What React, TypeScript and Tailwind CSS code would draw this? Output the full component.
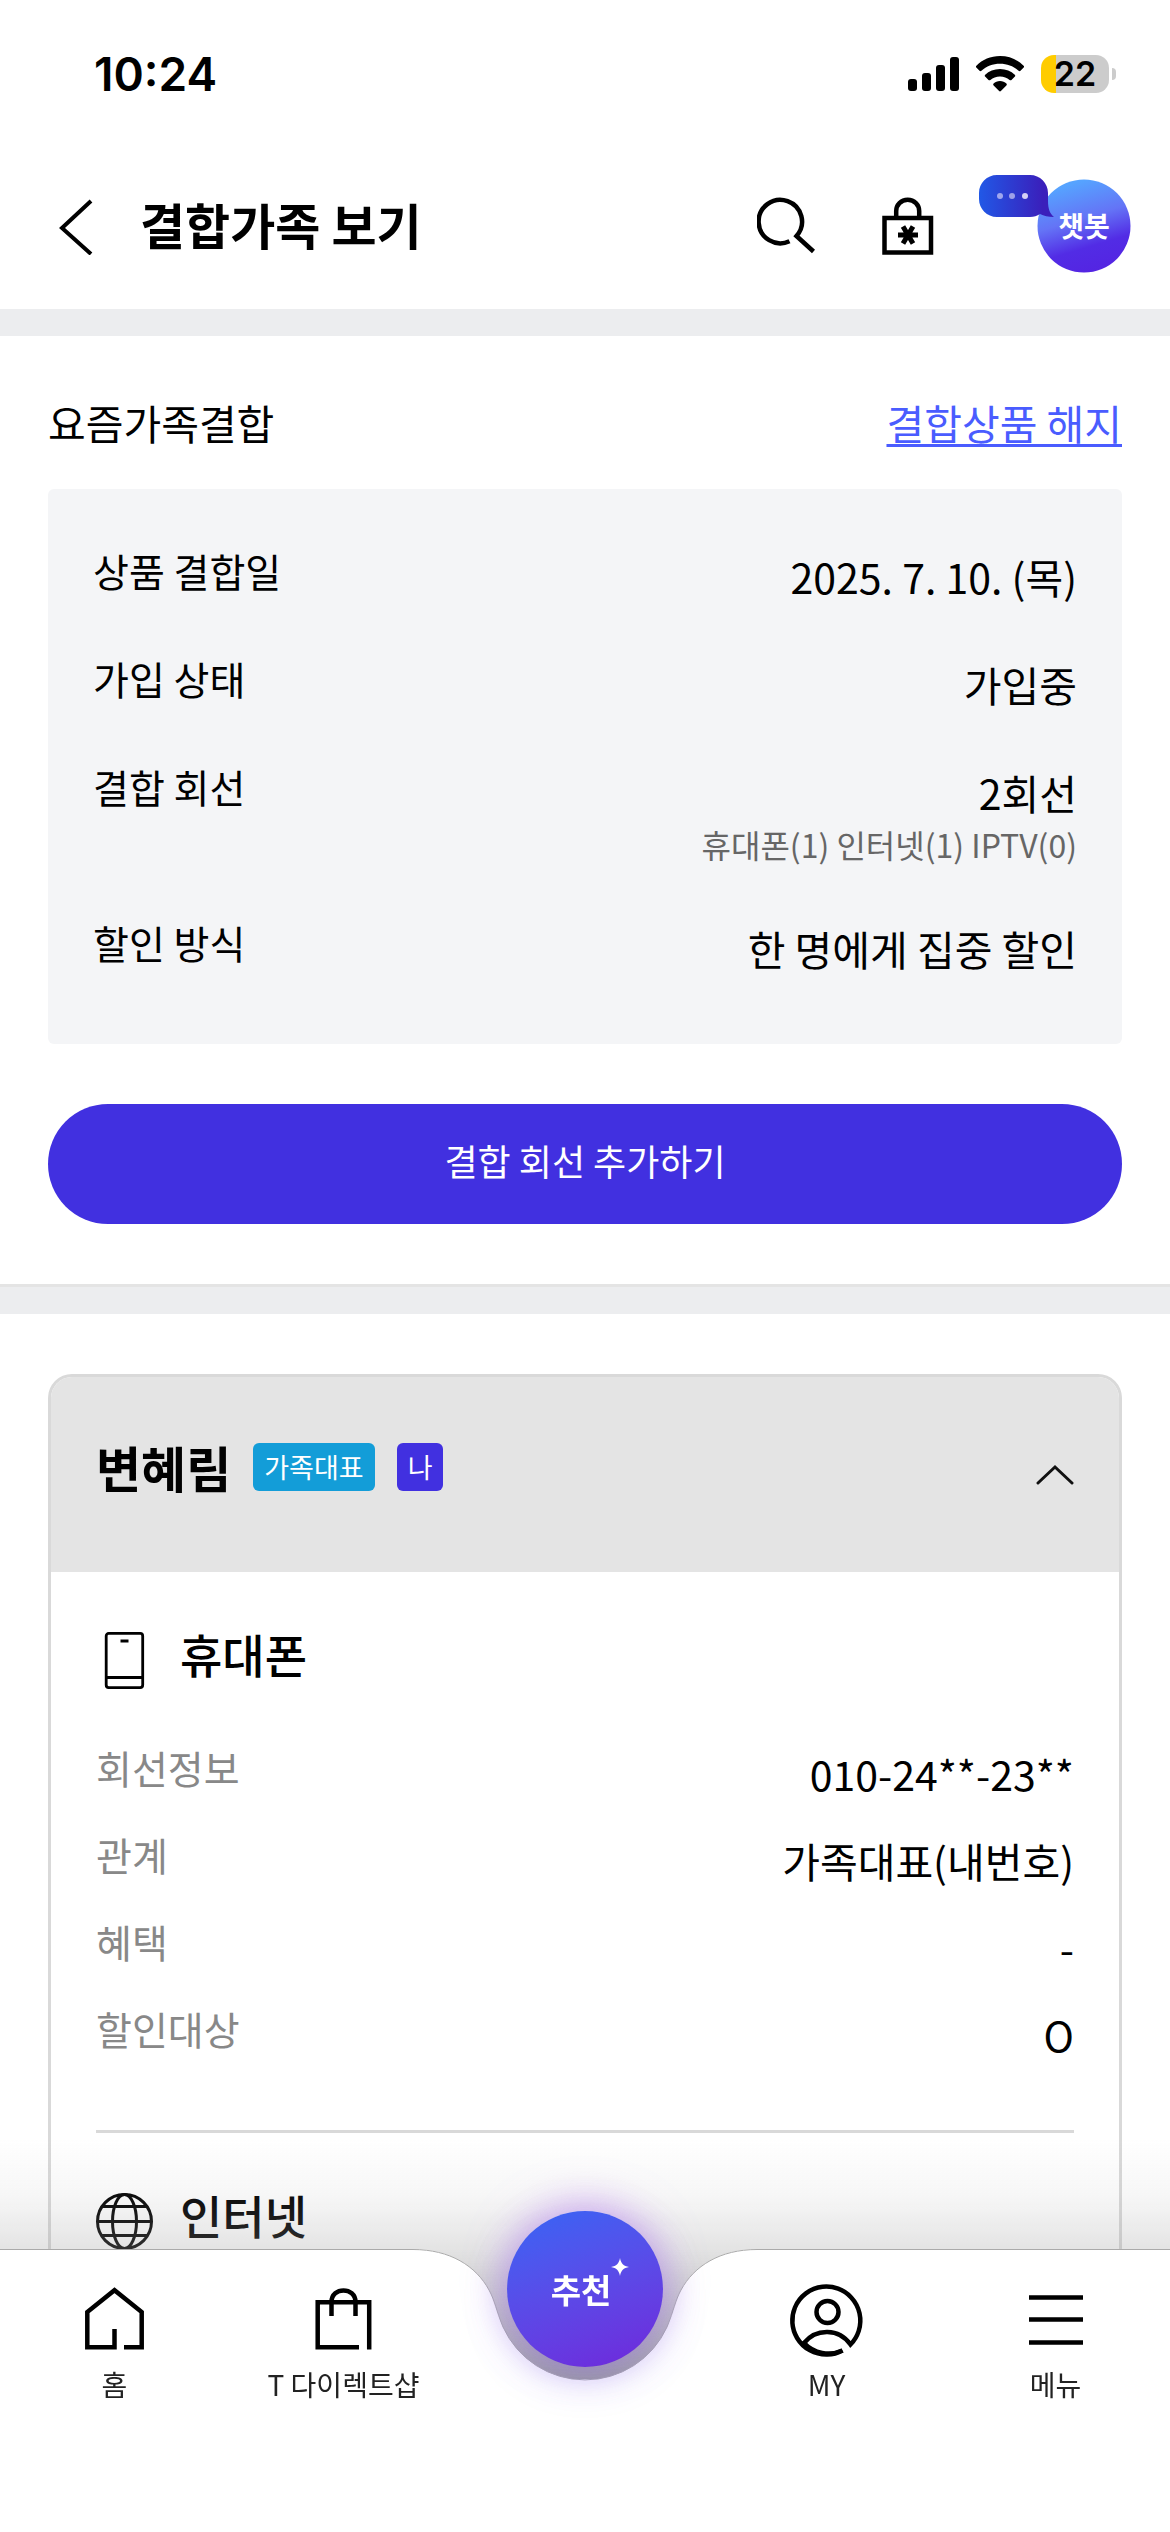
import { useState } from 'react';
import type { ReactNode } from 'react';

interface InfoItem {
  label: string;
  value: string;
  note?: string;
}

const SUMMARY: InfoItem[] = [
  { label: '상품 결합일', value: '2025. 7. 10. (목)' },
  { label: '가입 상태', value: '가입중' },
  { label: '결합 회선', value: '2회선', note: '휴대폰(1) 인터넷(1) IPTV(0)' },
  { label: '할인 방식', value: '한 명에게 집중 할인' },
];

const PHONE_INFO: InfoItem[] = [
  { label: '회선정보', value: '010-24**-23**' },
  { label: '관계', value: '가족대표(내번호)' },
  { label: '혜택', value: '-' },
  { label: '할인대상', value: 'O' },
];

function StatusBar() {
  return (
    <div className="flex items-center justify-between h-36 pt-1 pl-[94px] pr-[54px]">
      <span className="font-['Inter'] text-[46px] leading-[56px] font-semibold">10:24</span>
      <div className="flex items-center gap-[17px]">
        <svg className="w-[51px] h-[34px]" viewBox="0 0 51 34">
          <rect x="0" y="22" width="9" height="12" rx="3" />
          <rect x="14" y="16" width="9" height="18" rx="3" />
          <rect x="28" y="8" width="9" height="26" rx="3" />
          <rect x="42" y="0" width="9" height="34" rx="3" />
        </svg>
        <svg className="w-12 h-9" viewBox="0 0 48 36">
          <path d="M24 0C33.500 0 41.500 3.600 47.600 9.700C48.200 10.300 48.200 11 47.700 11.500L44.500 14.800C43.900 15.400 43.200 15.400 42.600 14.800C37.600 10.200 31.300 7.700 24 7.700C16.700 7.700 10.400 10.200 5.400 14.800C4.800 15.400 4.100 15.400 3.500 14.800L.3 11.500C-.2 11-.2 10.300.4 9.700C6.500 3.600 14.500 0 24 0Z" />
          <path d="M24 13C30 13 35 15.200 38.800 18.700C39.400 19.300 39.400 20 38.900 20.500L35.500 23.900C34.900 24.500 34.200 24.500 33.600 24C31 21.800 27.800 20.500 24 20.500C20.200 20.500 17 21.800 14.400 24C13.800 24.500 13.100 24.500 12.500 23.900L9.100 20.500C8.600 20 8.600 19.300 9.200 18.700C13 15.200 18 13 24 13Z" />
          <path d="M24 25C26.600 25 28.800 26 30.400 27.600C31 28.200 31 28.800 30.400 29.400L24.900 35.100C24.300 35.700 23.700 35.700 23.100 35.100L17.600 29.400C17 28.800 17 28.200 17.600 27.600C19.200 26 21.400 25 24 25Z" />
        </svg>
        <div className="flex items-center gap-[3px]">
          <span className="flex items-center justify-center w-[68px] h-[38px] rounded-[13px] bg-linear-to-r from-[#ffcc00] from-[22%] to-[#cccccc] to-[22%] font-['Inter'] text-[34px] leading-[38px] font-semibold">
            22
          </span>
          <span className="w-1 h-3 rounded-r-full bg-[#cccccc]" />
        </div>
      </div>
    </div>
  );
}

function Header() {
  return (
    <header className="flex items-center justify-between h-[165px] pl-[58px] pr-[39px]">
      <div className="flex items-center gap-[46px]">
        <button aria-label="뒤로">
          <svg className="w-9 h-14" viewBox="0 0 36 56" fill="none" stroke="#000" strokeWidth="4">
            <path d="M33 2L4 29L33 55" />
          </svg>
        </button>
        <h1 className="pb-1.5 text-[49px] leading-[72px] font-bold">결합가족 보기</h1>
      </div>
      <div className="flex items-center">
        <button aria-label="검색" className="mr-16">
          <svg className="w-[60px] h-[60px]" viewBox="0 0 60 60" fill="none" stroke="#000" strokeWidth="4.500">
            <path d="M56.500 54.500L39.500 39A21.700 21.700 0 1 0 32.500 44.200" />
          </svg>
        </button>
        <button aria-label="잠금" className="mr-11">
          <svg className="w-[54px] h-[60px]" viewBox="0 0 54 60" fill="none" stroke="#000" strokeWidth="4.500">
            <rect x="3.500" y="21" width="46.500" height="34.500" />
            <path d="M15.200 21V14C15.200 8 20 2.700 26.700 2.700S38.200 8 38.200 14V21" />
            <path d="M17 38H37M22 29.500L32 46.500M32 29.500L22 46.500" strokeWidth="5" />
          </svg>
        </button>
        <button aria-label="챗봇" className="flex flex-col justify-center w-[152px] h-[104px] relative">
          <svg className="w-[152px] h-[104px]" viewBox="0 0 152 104">
            <defs>
              <linearGradient id="bot" x1="0.350" y1="0" x2="0.650" y2="1">
                <stop offset="0.050" stopColor="#56a3ff" />
                <stop offset="0.420" stopColor="#6474f6" />
                <stop offset="0.720" stopColor="#522ce5" />
                <stop offset="1" stopColor="#5424e2" />
              </linearGradient>
              <linearGradient id="bubble" x1="0" y1="0" x2="1" y2="0">
                <stop offset="0" stopColor="#2158e6" />
                <stop offset="0.850" stopColor="#3a1fbb" />
              </linearGradient>
            </defs>
            <circle cx="105" cy="51" r="46.500" fill="url(#bot)" />
            <path
              d="M18 0H51C61 0 69 8 69 18V26C69 34 71 39 75 42C69 42 65 41 61 39C58 41 55 42 51 42H18C8 42 0 34 0 24V18C0 8 8 0 18 0Z"
              fill="url(#bubble)"
            />
            <circle cx="21" cy="21" r="3" fill="#9fa6ee" />
            <circle cx="33" cy="21" r="3" fill="#9fa0e8" />
            <circle cx="46" cy="21" r="3" fill="#d5d0f5" />
          </svg>
          <span className="absolute inset-y-0 right-0 w-[94px] text-[28px] leading-[100px] font-bold text-white">챗봇</span>
        </button>
      </div>
    </header>
  );
}

function InfoRow({ item, labelClass }: { item: InfoItem; labelClass: string }) {
  return (
    <div className="flex items-start justify-between">
      <dt className={labelClass}>{item.label}</dt>
      <dd className="text-right text-[41px] leading-[56px]">
        {item.value}
        {item.note && <p className="text-[32px] leading-[48px] text-[#666666]">{item.note}</p>}
      </dd>
    </div>
  );
}

function LineTitle({ icon, children }: { icon: ReactNode; children: ReactNode }) {
  return (
    <div className="flex items-end gap-[27px]">
      {icon}
      <h3 className="text-[46px] leading-[72px] font-medium">{children}</h3>
    </div>
  );
}

const phoneIcon = (
  <svg className="w-[57px] h-[57px]" viewBox="0 0 57 57" fill="none" stroke="#000" strokeWidth="2.800">
    <rect x="10.200" y="1.400" width="36.500" height="54.200" rx="2.500" />
    <path d="M10 45.500H47" />
    <path d="M24.500 9H32.500" strokeWidth="3" />
  </svg>
);

const globeIcon = (
  <svg className="w-[57px] h-[57px]" viewBox="0 0 57 57" fill="none" stroke="#000" strokeWidth="3">
    <circle cx="28.500" cy="28.500" r="27" />
    <ellipse cx="28.500" cy="28.500" rx="12" ry="27" />
    <path d="M1 28.500H56M6 13.500H51M6 42.500H51" />
  </svg>
);

function MemberCard() {
  const [open, setOpen] = useState(true);

  return (
    <div className="flex-1 mx-12 mt-[60px] border-[3px] border-b-0 border-[#d9d9d9] rounded-t-3xl overflow-hidden">
      <div className="flex items-center justify-between h-[195px] px-[45px] bg-[#e4e4e4]">
        <div className="flex items-center gap-[22px] pb-4">
          <h2 className="text-[49px] leading-[72px] font-bold">변혜림</h2>
          <span className="px-[11px] rounded-md bg-[#139dd8] text-[27px] leading-[48px] text-white">가족대표</span>
          <span className="px-[11px] rounded-md bg-[#4130e0] text-[27px] leading-[48px] text-white">나</span>
        </div>
        <button aria-label="접기" aria-expanded={open} onClick={() => setOpen(!open)}>
          <svg className="w-10 h-6" viewBox="0 0 40 24" fill="none" stroke="#111" strokeWidth="3" strokeLinecap="round">
            <path d="M4 20L21 4L38 20" />
          </svg>
        </button>
      </div>

      {open && (
        <div className="px-[45px]">
          <section className="pt-[45px] pb-[68px] border-b-[3px] border-[#d9d9d9]">
            <LineTitle icon={phoneIcon}>휴대폰</LineTitle>
            <dl className="flex flex-col gap-[31px] mt-14">
              {PHONE_INFO.map(item => (
                <InfoRow key={item.label} item={item} labelClass="text-[39px] leading-[44px] text-[#888888]" />
              ))}
            </dl>
          </section>
          <section className="pt-[45px]">
            <LineTitle icon={globeIcon}>인터넷</LineTitle>
          </section>
        </div>
      )}
    </div>
  );
}

function NavItem({ label, children }: { label: string; children: ReactNode }) {
  return (
    <a href="#" className="flex flex-col items-center text-[28px] leading-10 text-[#222222]">
      <svg className="w-20 h-20 mb-1.5" viewBox="0 0 80 80" fill="none" stroke="#000" strokeWidth="4.500">
        {children}
      </svg>
      {label}
    </a>
  );
}

function BottomNav() {
  return (
    <nav className="fixed inset-x-0 bottom-0 h-[283px]">
      {/* Shade over the scrolled content, it also fills the notch */}
      <div className="absolute inset-x-0 -top-[110px] h-60 bg-[linear-gradient(to_bottom,rgba(160,160,160,0)_0%,rgba(160,160,160,0.09)_24%,rgba(160,160,160,0.28)_45%,rgba(160,160,160,0.6)_70%,rgba(160,160,160,1)_100%)]" />

      {/* Bar with the notch in the middle */}
      <div className="absolute inset-0 flex">
        <div className="flex-1 bg-white border-t border-[#aaaaaa]" />
        <svg className="w-[360px] h-[283px]" viewBox="0 0 360 283">
          <path
            d="M0 0H8C45 0 71 17 84 41C90 52 91 61 98 78A90 90 0 0 0 262 78C269 61 270 52 276 41C289 17 315 0 352 0H360V283H0Z"
            fill="#fff"
          />
          <path
            d="M0 .5H8C45 .5 71 17 84 41C90 52 91 61 98 78A90 90 0 0 0 262 78C269 61 270 52 276 41C289 17 315 .5 352 .5H360"
            fill="none"
            stroke="#aaaaaa"
          />
        </svg>
        <div className="flex-1 bg-white border-t border-[#aaaaaa]" />
      </div>

      <div className="relative flex items-start">
        <div className="flex-1 grid grid-cols-2 pt-[29px]">
          <NavItem label="홈">
            <path d="M49 69.200H66.700V34L39.500 12.200L12.300 34V69.200H39.500V51" />
          </NavItem>
          <NavItem label="T 다이렉트샵">
            <path d="M55 69.200H13.700V24.200H65.200V71.500M27.500 38V24C27.500 8.500 51.500 8.500 51.500 24V38" />
          </NavItem>
        </div>
        <div className="flex justify-center w-[254px]">
          <button className="relative -mt-[38px] w-[156px] h-[156px] pr-2 rounded-full bg-linear-160 from-[#3365f5] to-[#6f24da] text-[33px] leading-[152px] font-bold text-white shadow-[0_-8px_40px_rgba(196,140,235,0.55),0_8px_40px_rgba(90,64,230,0.35)]">
            추천
            <svg className="absolute top-[47px] right-[34px] w-[18px] h-[18px]" viewBox="0 0 18 18" fill="#fff">
              <path d="M9 0C10 5.500 12.500 8 18 9C12.500 10 10 12.500 9 18C8 12.500 5.500 10 0 9C5.500 8 8 5.500 9 0Z" />
            </svg>
          </button>
        </div>
        <div className="flex-1 grid grid-cols-2 pt-[29px]">
          <NavItem label="MY">
            <path d="M55.500 72.500A34 34 0 1 1 63.500 66.500C52 50 29 50 17 65" />
            <path d="M17 65A34 34 0 0 0 55.500 72.500" />
            <circle cx="40.500" cy="34" r="11" />
          </NavItem>
          <NavItem label="메뉴">
            <path d="M13 19.500H67M13 41.500H67M13 64.500H67" />
          </NavItem>
        </div>
      </div>
    </nav>
  );
}

export default function App() {
  return (
    <div className="flex flex-col min-h-screen bg-white text-black font-['Noto_Sans_CJK_KR','Noto_Sans',sans-serif]">
      <StatusBar />
      <Header />

      <main className="flex flex-1 flex-col border-t-[27px] border-[#ecedef]">
        <section className="px-12 pt-[58px] pb-[60px]">
          <div className="flex items-center justify-between text-[41px] leading-[56px]">
            <h2>요즘가족결합</h2>
            <a href="#" className="text-[#4a5cff] underline decoration-[3px] underline-offset-4">결합상품 해지</a>
          </div>
          <dl className="flex flex-col gap-[52px] mt-[39px] pt-[59px] pb-[68px] px-[45px] rounded-md bg-[#f4f5f7]">
            {SUMMARY.map(item => (
              <InfoRow key={item.label} item={item} labelClass="text-[39px] leading-[44px]" />
            ))}
          </dl>
          <button className="w-full h-[120px] mt-[60px] pb-2 rounded-full bg-[#4130e0] text-[36px] text-white">
            결합 회선 추가하기
          </button>
        </section>
        <div className="h-[30px] border-t-[3px] border-[#e4e4e4] bg-[#ecedef]" />
        <MemberCard />
      </main>

      <BottomNav />
    </div>
  );
}
